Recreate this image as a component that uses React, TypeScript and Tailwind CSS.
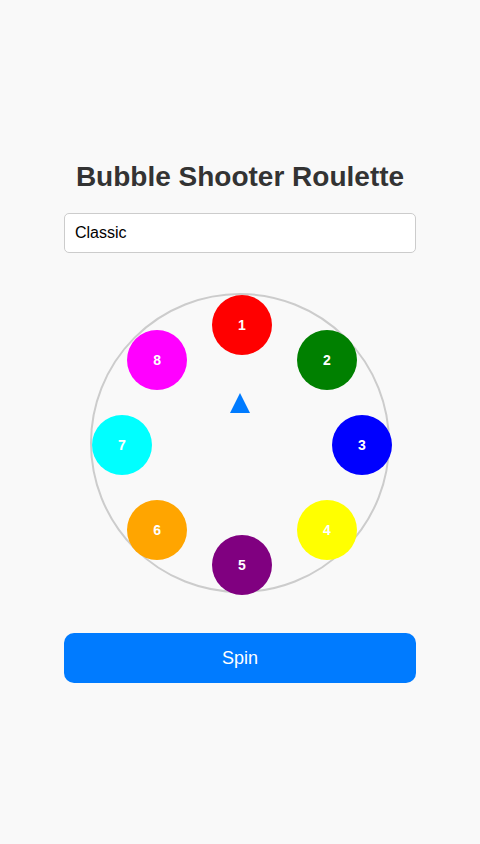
import React from "react";

const bubbles = [
  { n: 1, color: "#ff0000" },
  { n: 2, color: "#008000" },
  { n: 3, color: "#0000ff" },
  { n: 4, color: "#ffff00" },
  { n: 5, color: "#800080" },
  { n: 6, color: "#ffa500" },
  { n: 7, color: "#00ffff" },
  { n: 8, color: "#ff00ff" },
];

export default function App() {
  const radius = 120;

  return (
    <div
      className="min-h-screen bg-[#f9f9f9] flex items-center justify-center"
      style={{ fontFamily: '"Liberation Sans", Arial, sans-serif' }}
    >
      <div className="w-[352px] flex flex-col items-center">
        <h1 className="text-[28px] leading-[32px] font-bold text-[#333]">
          Bubble Shooter Roulette
        </h1>
        <input
          readOnly
          value="Classic"
          className="mt-5 w-full h-10 px-[10px] text-base text-black bg-white border border-[#ccc] rounded-[5px] outline-none"
        />
        <div className="mt-10 relative w-[300px] h-[300px] rounded-full border-2 border-[#ccc]">
          {bubbles.map((b, i) => {
            const angle = (i * Math.PI) / 4;
            const x = 150 + radius * Math.sin(angle) - 30;
            const y = 150 - radius * Math.cos(angle) - 30;
            return (
              <div
                key={b.n}
                className="absolute w-[60px] h-[60px] rounded-full flex items-center justify-center text-white text-sm font-bold"
                style={{ left: x, top: y, backgroundColor: b.color }}
              >
                {b.n}
              </div>
            );
          })}
          <div className="absolute left-[138px] top-[98px] w-0 h-0 border-l-[10px] border-r-[10px] border-b-[20px] border-l-transparent border-r-transparent border-b-[#007bff]" />
        </div>
        <button className="mt-10 w-full h-[50px] bg-[#007bff] text-white text-lg rounded-[10px]">
          Spin
        </button>
      </div>
    </div>
  );
}
